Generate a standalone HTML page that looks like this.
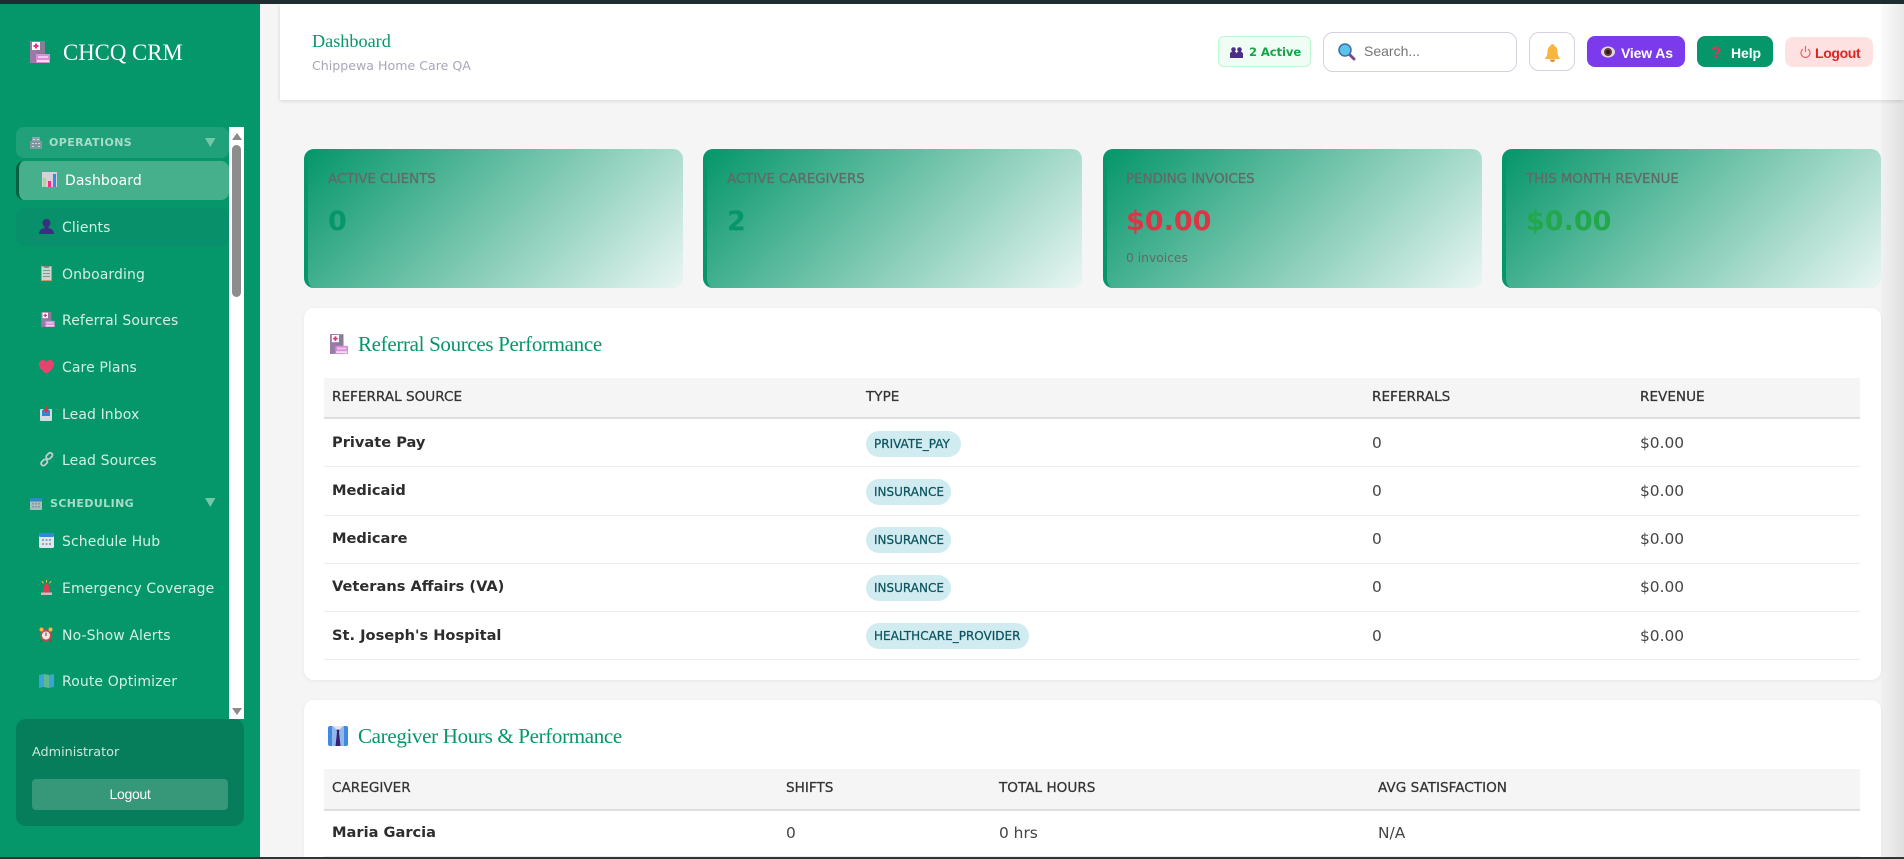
<!DOCTYPE html>
<html lang="en">
<head>
<meta charset="utf-8">
<title>CHCQ CRM Dashboard</title>
<style>
*{box-sizing:border-box;margin:0;padding:0}
html,body{width:1904px;height:859px;overflow:hidden;background:#f5f5f5;font-family:"DejaVu Sans","Liberation Sans",sans-serif;color:#333}
body{position:relative}
.a{position:absolute}
.t{position:absolute;white-space:nowrap;line-height:20px;height:20px}
svg{position:absolute;display:block}
.nav{font-size:14px;color:#d3f0e5;letter-spacing:.1px;margin-top:1px}
.sec{font-size:11px;font-weight:700;color:#a6dcc8;letter-spacing:.4px;margin-top:1px}
.card{position:absolute;top:149px;width:379px;height:139px;border-left:4px solid #059669;border-radius:10px;background:linear-gradient(135deg,#059669 0%,#e9f6f3 100%)}
.lbl{font-size:13.5px;color:#5f6a66;letter-spacing:-.1px;margin-top:1px;-webkit-text-stroke:.25px #5f6a66}
.val{font-size:27px;font-weight:700;line-height:32px;height:32px;margin-top:1px}
.panel{position:absolute;left:304px;width:1577px;background:#fff;border-radius:10px;box-shadow:0 1px 4px rgba(0,0,0,.06)}
.h2{font-family:"Liberation Serif",serif;font-size:21px;color:#059669;letter-spacing:-.33px}
.th{position:absolute;left:324px;width:1536px;height:41px;background:#f5f5f5;border-bottom:2px solid #dedede}
.hd{font-size:13.6px;color:#333;-webkit-text-stroke:.25px #333}
.name{font-size:14.6px;font-weight:700;color:#2d2d2d;margin-top:1px}
.cell{font-size:15.4px;color:#444;margin-top:1px}
.line{position:absolute;left:324px;width:1536px;height:1px;background:#eeeeee}
.badge{position:absolute;left:866px;height:26px;border-radius:13px;background:#d1ecf1;color:#0c5460;font-size:12px;line-height:27px;padding-left:8px;white-space:nowrap;-webkit-text-stroke:.25px #0c5460}
.btn{position:absolute;top:36px;height:31px;border-radius:8px}
</style>
</head>
<body>
<svg width="0" height="0" style="position:absolute">
<defs>
<symbol id="hosp" viewBox="0 0 20 22">
<rect x="0" y="0" width="15" height="22" fill="#8c7a99"/>
<rect x="0" y="0" width="7" height="22" fill="#9a7ba8"/>
<rect x="2" y="1" width="8" height="8" fill="#fff"/>
<path d="M5 2.500h2v1.500h1.500v2H7v1.500H5V6H3.500V4H5z" fill="#e8308a"/>
<rect x="6" y="13" width="14" height="9" fill="#d98fd8"/>
<rect x="8" y="15" width="10" height="2" fill="#f0c8ee"/>
<rect x="7" y="19" width="12" height="2" fill="#f7d9f3"/>
</symbol>
<symbol id="tie" viewBox="0 0 20 22">
<rect x="0" y="0" width="20" height="22" rx="2" fill="#3f8ae0"/>
<rect x="4" y="0" width="12" height="22" fill="#8fb9e8"/>
<path d="M5 0h10l-5 6z" fill="#e6e2ee"/>
<path d="M8.500 4h3l-.5 3 1.500 15h-5l1.500-15z" fill="#3a1d78"/>
</symbol>
</defs>
</svg>

<!-- sidebar -->
<div class="a" style="left:0;top:0;width:260px;height:859px;background:#059669"></div>
<svg style="left:30px;top:41px" width="20" height="22"><use href="#hosp"/></svg>
<div class="t" style="left:63px;top:42px;font-family:'Liberation Serif',serif;font-size:22.8px;line-height:22px;height:24px;color:#fff">CHCQ CRM</div>

<div class="a" style="left:16px;top:127px;width:213px;height:31px;background:rgba(255,255,255,.11);border-radius:8px"></div>
<svg style="left:30px;top:137px" width="12" height="12" viewBox="0 0 12 12"><rect x="2" y="0" width="8" height="12" fill="#8aa5ad"/><rect x="0" y="4" width="12" height="8" fill="#7d979f"/><path d="M3 2h2v1H3zM7 2h2v1H7zM2 6h2v1H2zM5 6h2v1H5zM8 6h2v1H8zM2 9h2v1H2zM8 9h2v1H8z" fill="#c9dadd"/></svg>
<div class="t sec" style="left:49px;top:132px">OPERATIONS</div>
<svg style="left:205px;top:138px" width="11" height="9"><path d="M0 0h10.500L5.250 9z" fill="#74c7a9"/></svg>

<div class="a" style="left:16px;top:161px;width:213px;height:39px;background:#46b08d;border-left:3px solid #06603f;border-radius:8px"></div>
<svg style="left:42px;top:172px" width="15" height="15" viewBox="0 0 15 15"><rect width="15" height="15" fill="#d8cfd8"/><rect x="1" y="6" width="3" height="9" fill="#9be08a"/><rect x="6" y="9" width="3" height="6" fill="#ef2f86"/><rect x="11" y="2" width="3" height="13" fill="#2f8fe0"/></svg>
<div class="t nav" style="left:65px;top:170px;color:#fff">Dashboard</div>

<div class="a" style="left:16px;top:208px;width:213px;height:38px;background:#08906a;border-radius:8px"></div>
<svg style="left:39px;top:219px" width="15" height="15" viewBox="0 0 15 15"><circle cx="7.500" cy="4" r="4" fill="#3b2f80"/><rect x="5.500" y="6" width="4" height="4" fill="#3b2f80"/><path d="M0 15c0-4 3-6 7.500-6s7.500 2 7.500 6z" fill="#3b2f80"/></svg>
<div class="t nav" style="left:62px;top:217px">Clients</div>

<svg style="left:41px;top:266px" width="11" height="15" viewBox="0 0 11 15"><rect width="11" height="15" fill="#cf9a5c"/><rect x="1" y="1" width="9" height="13" fill="#cfd6d2"/><rect x="3" y="0" width="5" height="2" fill="#7e8c88"/><path d="M2 4h7v1H2zM2 7h7v1H2zM2 10h7v1H2z" fill="#84938e"/></svg>
<div class="t nav" style="left:62px;top:264px">Onboarding</div>

<svg style="left:41px;top:312px" width="14" height="15" viewBox="0 0 20 22"><use href="#hosp"/></svg>
<div class="t nav" style="left:62px;top:310px">Referral Sources</div>

<svg style="left:39px;top:360px" width="15" height="14" viewBox="0 0 15 14"><path d="M7.500 14C3 10.500 0 8 0 4.300 0 1.800 1.900 0 4 0c1.500 0 2.700.7 3.500 2C8.300.7 9.500 0 11 0c2.100 0 4 1.800 4 4.300C15 8 12 10.500 7.500 14z" fill="#e8436e"/></svg>
<div class="t nav" style="left:62px;top:357px">Care Plans</div>

<svg style="left:40px;top:406px" width="12" height="15" viewBox="0 0 12 15"><rect x="0" y="3" width="12" height="12" rx="1" fill="#d3dce0"/><rect x="2" y="4" width="8" height="6" fill="#2f88d0"/><path d="M5 0h2v3h2L6 7 3 3h2z" fill="#d8324a"/></svg>
<div class="t nav" style="left:62px;top:404px">Lead Inbox</div>

<svg style="left:39px;top:452px" width="15" height="15" viewBox="0 0 15 15"><g fill="none" stroke="#bfd0ca" stroke-width="1.800"><rect x="7.500" y="1" width="7" height="4.500" rx="2.200" transform="rotate(-45 11 3.200) translate(-1 0)"/><rect x="1" y="8" width="7" height="4.500" rx="2.200" transform="rotate(-45 4 10) translate(0 1)"/></g></svg>
<div class="t nav" style="left:62px;top:450px">Lead Sources</div>

<svg style="left:30px;top:498px" width="12" height="12" viewBox="0 0 12 12"><rect width="12" height="12" rx="1" fill="#a5bec0"/><rect width="12" height="3.500" rx="1" fill="#3187c9"/><path d="M2 5h2v1.500H2zM5 5h2v1.500H5zM8 5h2v1.500H8zM2 8h2v1.500H2zM5 8h2v1.500H5zM8 8h2v1.500H8z" fill="#7f9da0"/></svg>
<div class="t sec" style="left:50px;top:493px">SCHEDULING</div>
<svg style="left:205px;top:498px" width="11" height="9"><path d="M0 0h10.500L5.250 9z" fill="#74c7a9"/></svg>

<svg style="left:39px;top:533px" width="15" height="15" viewBox="0 0 15 15"><rect width="15" height="15" rx="1.500" fill="#dfe6ee"/><rect width="15" height="4" rx="1.500" fill="#2f88d8"/><path d="M3 6h2v2H3zM6.500 6h2v2h-2zM10 6h2v2h-2zM3 10h2v2H3zM6.500 10h2v2h-2zM10 10h2v2h-2z" fill="#8ea7c2"/></svg>
<div class="t nav" style="left:62px;top:531px">Schedule Hub</div>

<svg style="left:40px;top:580px" width="13" height="15" viewBox="0 0 13 15"><path d="M3 13l1-7c.2-1.500 1.200-2 2.500-2S8.800 4.500 9 6l1 7z" fill="#e23c50"/><rect x="1" y="12.500" width="11" height="2.500" fill="#d7b8c0"/><path d="M6 0h1v2.500H6zM1.500 1.500l.8-.6L4 3l-.8.6zM11.500 1.500l-.8-.6L9 3l.8.6z" fill="#f0c33c"/></svg>
<div class="t nav" style="left:62px;top:578px">Emergency Coverage</div>

<svg style="left:39px;top:627px" width="14" height="15" viewBox="0 0 14 15"><circle cx="7" cy="8.500" r="5.500" fill="#d9434f"/><circle cx="7" cy="8.500" r="4" fill="#f0e8e0"/><path d="M6.500 5.500h1v3.500H6.500z" fill="#444"/><circle cx="2.500" cy="2.500" r="2" fill="#f0bd3a"/><circle cx="11.500" cy="2.500" r="2" fill="#f0bd3a"/><path d="M3 13l-1 2M11 13l1 2" stroke="#b03040" stroke-width="1"/></svg>
<div class="t nav" style="left:62px;top:625px">No-Show Alerts</div>

<svg style="left:39px;top:674px" width="15" height="14" viewBox="0 0 15 14"><path d="M0 1l5-1 5 1 5-1v13l-5 1-5-1-5 1z" fill="#3aa3d8"/><path d="M5 0v13l5 1V1z" fill="#5fb98a"/></svg>
<div class="t nav" style="left:62px;top:671px">Route Optimizer</div>

<div class="a" style="left:229px;top:127px;width:15px;height:592px;background:#fff"></div>
<svg style="left:232px;top:133px" width="10" height="7"><path d="M0 7L5 0l5 7z" fill="#8a8a8a"/></svg>
<div class="a" style="left:232px;top:145px;width:9px;height:152px;background:#8d8d8d;border-radius:5px"></div>
<svg style="left:232px;top:708px" width="10" height="7"><path d="M0 0l5 7 5-7z" fill="#8a8a8a"/></svg>

<div class="a" style="left:16px;top:719px;width:228px;height:107px;background:#067d5b;border-radius:10px"></div>
<div class="t" style="left:32px;top:743px;font-size:12.8px;color:#c9eadd">Administrator</div>
<div class="a" style="left:32px;top:779px;width:196px;height:31px;background:#369878;border-radius:4px;font:14px/31px 'Liberation Sans',sans-serif;letter-spacing:-.3px;color:#fff;text-align:center">Logout</div>

<!-- header -->
<div class="a" style="left:280px;top:4px;width:1624px;height:96px;background:#fff;box-shadow:0 1px 4px rgba(0,0,0,.13)"></div>
<div class="t" style="left:312px;top:31px;font-family:'Liberation Serif',serif;font-size:18.2px;color:#059669">Dashboard</div>
<div class="t" style="left:312px;top:56px;font-size:12.6px;color:#a7a7b8">Chippewa Home Care QA</div>

<div class="a" style="left:1218px;top:36px;width:93px;height:31px;background:#f0fdf4;border:1px solid #bbf7d0;border-radius:6px"></div>
<svg style="left:1230px;top:47px" width="13" height="11" viewBox="0 0 13 11"><circle cx="3.500" cy="2.500" r="2.300" fill="#4b2f85"/><circle cx="9.500" cy="2.500" r="2.300" fill="#4b2f85"/><path d="M0 11V7c0-1.500 1-2.500 3.500-2.500S6.500 5.500 6.500 7c0-1.500 1-2.500 3-2.500S13 5.500 13 7v4z" fill="#4b2f85"/></svg>
<div class="t" style="left:1249px;top:42px;font-size:11.6px;font-weight:700;color:#16a34a;letter-spacing:-.1px">2 Active</div>

<div class="a" style="left:1323px;top:32px;width:194px;height:40px;background:#fff;border:1.5px solid #d3d3de;border-radius:10px"></div>
<svg style="left:1338px;top:43px" width="18" height="18" viewBox="0 0 18 18"><path d="M10 10l6 6" stroke="#7a4a8c" stroke-width="3" stroke-linecap="round"/><circle cx="7" cy="7" r="6" fill="#5cc4ea" stroke="#3c6ea8" stroke-width="1.500"/></svg>
<div class="t" style="left:1364px;top:41px;font:14px/20px 'Liberation Sans',sans-serif;color:#757575">Search...</div>

<div class="a" style="left:1529px;top:32px;width:46px;height:39px;background:#fff;border:1.5px solid #d3d3de;border-radius:10px"></div>
<svg style="left:1544px;top:44px" width="17" height="18" viewBox="0 0 17 18"><path d="M8.500 0c1 0 1.500.7 1.500 1.500C12.500 2.500 13.500 5 13.500 8c0 3 1 5 3 7H.5c2-2 3-4 3-7 0-3 1-5.500 3.500-6.500C7 .7 7.500 0 8.500 0z" fill="#f6b63f"/><path d="M6 15.500h5c0 1.500-1 2.500-2.500 2.500S6 17 6 15.500z" fill="#e58a2e"/></svg>

<div class="btn" style="left:1587px;width:98px;background:#7c3aed"></div>
<svg style="left:1601px;top:46px" width="14" height="12" viewBox="0 0 14 12"><ellipse cx="7" cy="6" rx="7" ry="5.500" fill="#e2d8dc"/><circle cx="7" cy="6" r="4" fill="#6a3b3b"/><circle cx="7" cy="6" r="2" fill="#2d1a1a"/></svg>
<div class="t" style="left:1621px;top:43px;font:700 14px/20px 'Liberation Sans',sans-serif;color:#fff;letter-spacing:-.15px">View As</div>

<div class="btn" style="left:1697px;width:76px;background:#059669"></div>
<div class="t" style="left:1711px;top:43px;font:700 17px/20px 'Liberation Sans',sans-serif;color:#e8305a">?</div>
<div class="t" style="left:1731px;top:43px;font:700 14px/20px 'Liberation Sans',sans-serif;color:#fff;letter-spacing:-.1px">Help</div>

<div class="a" style="left:1785px;top:37px;width:88px;height:30px;border-radius:8px;background:#fee2e2"></div>
<svg style="left:1800px;top:46px" width="11" height="13" viewBox="0 0 11 13"><path d="M3 3.200a4.500 4.500 0 1 0 5 0M5.500 0v6" fill="none" stroke="#ee5a5a" stroke-width="1.100"/></svg>
<div class="t" style="left:1815px;top:43px;font:700 14px/20px 'Liberation Sans',sans-serif;color:#dc2626;letter-spacing:-.35px">Logout</div>

<!-- stat cards -->
<div class="card" style="left:304px"></div>
<div class="card" style="left:703px"></div>
<div class="card" style="left:1103px"></div>
<div class="card" style="left:1502px"></div>
<div class="t lbl" style="left:328px;top:168px">ACTIVE CLIENTS</div>
<div class="t lbl" style="left:727px;top:168px">ACTIVE CAREGIVERS</div>
<div class="t lbl" style="left:1126px;top:168px">PENDING INVOICES</div>
<div class="t lbl" style="left:1526px;top:168px">THIS MONTH REVENUE</div>
<div class="t val" style="left:328px;top:205px;color:#059669">0</div>
<div class="t val" style="left:727px;top:205px;color:#059669">2</div>
<div class="t val" style="left:1126px;top:205px;color:#dc3545">$0.00</div>
<div class="t val" style="left:1526px;top:205px;color:#22a84a">$0.00</div>
<div class="t" style="left:1126px;top:248px;font-size:12.3px;color:#5f6a66">0 invoices</div>

<!-- referral panel -->
<div class="panel" style="top:308px;height:372px"></div>
<svg style="left:330px;top:334px" width="18" height="20" viewBox="0 0 20 22"><use href="#hosp"/></svg>
<div class="t h2" style="left:358px;top:334px">Referral Sources Performance</div>
<div class="th" style="top:378px"></div>
<div class="t hd" style="left:332px;top:387px">REFERRAL SOURCE</div>
<div class="t hd" style="left:866px;top:387px">TYPE</div>
<div class="t hd" style="left:1372px;top:387px">REFERRALS</div>
<div class="t hd" style="left:1640px;top:387px">REVENUE</div>

<div class="t name" style="left:332px;top:432px">Private Pay</div>
<div class="badge" style="top:431px;width:95px">PRIVATE_PAY</div>
<div class="t cell" style="left:1372px;top:432px">0</div><div class="t cell" style="left:1640px;top:432px">$0.00</div>
<div class="line" style="top:466px"></div>

<div class="t name" style="left:332px;top:480px">Medicaid</div>
<div class="badge" style="top:479px;width:85px">INSURANCE</div>
<div class="t cell" style="left:1372px;top:480px">0</div><div class="t cell" style="left:1640px;top:480px">$0.00</div>
<div class="line" style="top:515px"></div>

<div class="t name" style="left:332px;top:528px">Medicare</div>
<div class="badge" style="top:527px;width:85px">INSURANCE</div>
<div class="t cell" style="left:1372px;top:528px">0</div><div class="t cell" style="left:1640px;top:528px">$0.00</div>
<div class="line" style="top:563px"></div>

<div class="t name" style="left:332px;top:576px">Veterans Affairs (VA)</div>
<div class="badge" style="top:575px;width:85px">INSURANCE</div>
<div class="t cell" style="left:1372px;top:576px">0</div><div class="t cell" style="left:1640px;top:576px">$0.00</div>
<div class="line" style="top:611px"></div>

<div class="t name" style="left:332px;top:625px">St. Joseph's Hospital</div>
<div class="badge" style="top:623px;width:163px">HEALTHCARE_PROVIDER</div>
<div class="t cell" style="left:1372px;top:625px">0</div><div class="t cell" style="left:1640px;top:625px">$0.00</div>
<div class="line" style="top:659px"></div>

<!-- caregiver panel -->
<div class="panel" style="top:700px;height:159px;border-radius:10px 10px 0 0"></div>
<svg style="left:328px;top:726px" width="20" height="20" viewBox="0 0 20 22" preserveAspectRatio="none"><use href="#tie"/></svg>
<div class="t h2" style="left:358px;top:726px">Caregiver Hours &amp; Performance</div>
<div class="th" style="top:769px;height:42px"></div>
<div class="t hd" style="left:332px;top:778px">CAREGIVER</div>
<div class="t hd" style="left:786px;top:778px">SHIFTS</div>
<div class="t hd" style="left:999px;top:778px">TOTAL HOURS</div>
<div class="t hd" style="left:1378px;top:778px">AVG SATISFACTION</div>
<div class="t name" style="left:332px;top:822px">Maria Garcia</div>
<div class="t cell" style="left:786px;top:822px">0</div>
<div class="t cell" style="left:999px;top:822px">0 hrs</div>
<div class="t cell" style="left:1378px;top:822px">N/A</div>
<div class="line" style="top:856px"></div>

<!-- window edges -->
<div class="a" style="left:1881px;top:4px;width:23px;height:853px;background:linear-gradient(90deg,rgba(0,0,0,.015),rgba(0,0,0,.09))"></div>
<div class="a" style="left:0;top:0;width:1904px;height:4px;background:#1f2d30"></div>
<div class="a" style="left:0;top:857px;width:1904px;height:2px;background:#333"></div>
</body>
</html>
